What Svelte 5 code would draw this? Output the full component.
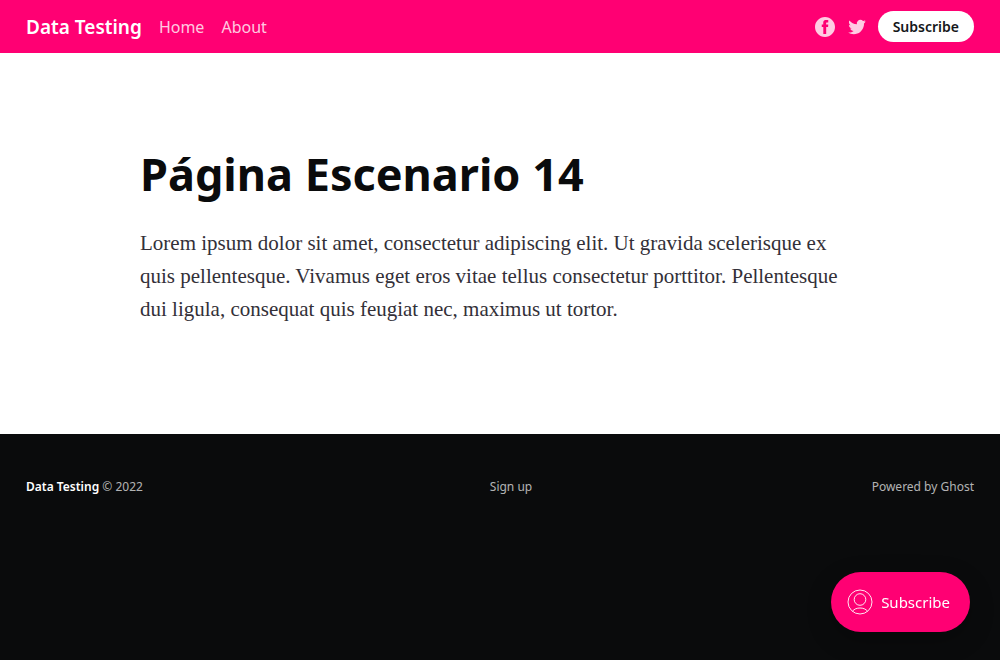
<script>
  const title = 'Data Testing';
</script>

<div class="page">
  <header class="bar">
    <nav class="links">
      <a class="brand" href="#home">{title}</a>
      <a href="#home">Home</a>
      <a href="#about">About</a>
    </nav>
    <div class="actions">
      <div class="socials">
        <a href="#facebook" aria-label="Facebook">
          <svg width="20" height="20" viewBox="0 0 32 32" fill="currentColor"><path d="M16 0c8.837 0 16 7.163 16 16s-7.163 16-16 16S0 24.837 0 16 7.163 0 16 0zm5.204 4.911h-3.546c-2.103 0-4.443.885-4.443 3.934.01 1.062 0 2.08 0 3.225h-2.433v3.872h2.509v11.147h4.61v-11.22h3.042l.275-3.81h-3.397s.007-1.695 0-2.187c0-1.205 1.253-1.136 1.329-1.136.596 0 1.756.002 2.054 0V4.911z" /></svg>
        </a>
        <a href="#twitter" aria-label="Twitter">
          <svg width="20" height="20" viewBox="0 0 32 32" fill="currentColor"><path d="M30.063 7.313c-.813 1.125-1.75 2.125-2.875 2.938v.75c0 1.563-.188 3.125-.688 4.625a15.088 15.088 0 0 1-2.063 4.438c-.875 1.438-2 2.688-3.25 3.813a15.015 15.015 0 0 1-4.625 2.563c-1.813.688-3.75 1-5.75 1-3.25 0-6.188-.875-8.875-2.625.438.063.875.125 1.375.125 2.688 0 5.063-.875 7.188-2.5-1.25 0-2.375-.375-3.375-1.125s-1.688-1.688-2.063-2.875c.438.063.813.125 1.125.125.5 0 1-.063 1.5-.25-1.313-.25-2.438-.938-3.313-1.938a5.673 5.673 0 0 1-1.313-3.688v-.063c.813.438 1.688.688 2.625.688a5.228 5.228 0 0 1-1.875-2c-.5-.875-.688-1.813-.688-2.75 0-1.063.25-2.063.75-2.938 1.438 1.75 3.188 3.188 5.25 4.25s4.313 1.688 6.688 1.813a5.579 5.579 0 0 1 1.5-5.438c1.125-1.125 2.5-1.688 4.125-1.688s3.063.625 4.188 1.813a11.48 11.48 0 0 0 3.688-1.375c-.438 1.375-1.313 2.438-2.563 3.188 1.125-.125 2.188-.438 3.313-.875z" /></svg>
        </a>
      </div>
      <button class="subscribe">Subscribe</button>
    </div>
  </header>

  <main>
    <article>
      <h1>Página Escenario 14</h1>
      <p>
        Lorem ipsum dolor sit amet, consectetur adipiscing elit. Ut gravida scelerisque ex quis
        pellentesque. Vivamus eget eros vitae tellus consectetur porttitor. Pellentesque dui ligula,
        consequat quis feugiat nec, maximus ut tortor.
      </p>
    </article>
  </main>

  <footer>
    <section><a class="name" href="#home">{title}</a> © 2022</section>
    <nav class="signup"><a href="#signup">Sign up</a></nav>
    <div class="powered"><a href="#ghost">Powered by Ghost</a></div>
  </footer>

  <button class="portal">
    <svg width="26" height="26" viewBox="0 0 26 26" fill="none" stroke="currentColor" stroke-width="0.9" aria-hidden="true">
      <circle cx="13" cy="13" r="12" />
      <circle cx="13" cy="10.5" r="5.8" />
      <path d="M5.500 22.200C7.200 20 9.900 19 13 19s5.800 1 7.500 3.200" />
    </svg>
    <span>Subscribe</span>
  </button>
</div>

<style>
  :global(body) {
    margin: 0;
    background: #0a0b0c;
  }
  .page {
    min-height: 100vh;
    display: flex;
    flex-direction: column;
    font-family: 'Noto Sans', sans-serif;
    background: #fff;
  }
  a {
    color: inherit;
    text-decoration: none;
  }
  button {
    border: 0;
    font-family: inherit;
    cursor: pointer;
  }
  .bar {
    display: flex;
    align-items: center;
    justify-content: space-between;
    height: 53px;
    padding: 0 26px;
    background: #ff0073;
    color: rgba(255, 255, 255, 0.8);
    font-size: 16px;
  }
  .links {
    display: flex;
    align-items: center;
    gap: 17px;
  }
  .brand {
    color: #fff;
    font-size: 19px;
    font-weight: 600;
  }
  .actions {
    display: flex;
    align-items: center;
    gap: 11px;
  }
  .socials {
    display: flex;
    gap: 12px;
  }
  .socials a {
    display: flex;
  }
  .subscribe {
    height: 31px;
    padding: 0 15px;
    border-radius: 16px;
    background: #fff;
    color: #15171a;
    font-size: 14px;
    font-weight: 600;
  }
  main {
    padding: 88px 26px 108px;
  }
  article {
    max-width: 720px;
    margin: 0 auto;
  }
  h1 {
    margin: 0 0 20px;
    color: #0a0b0c;
    font-size: 45px;
    font-weight: 700;
    line-height: 66px;
  }
  p {
    margin: 0;
    color: #333038;
    font-family: 'Liberation Serif', serif;
    font-size: 21px;
    line-height: 33px;
  }
  footer {
    flex: 1;
    display: grid;
    grid-template-columns: 1fr auto 1fr;
    align-items: start;
    padding: 42px 26px 60px;
    background: #0a0b0c;
    color: rgba(255, 255, 255, 0.7);
    font-size: 12px;
    line-height: 21px;
  }
  .name {
    color: #fff;
    font-weight: 600;
  }
  .signup {
    padding-left: 22px;
  }
  .powered {
    text-align: right;
  }
  .portal {
    position: fixed;
    right: 30px;
    bottom: 28px;
    display: flex;
    align-items: center;
    gap: 8px;
    height: 60px;
    padding: 0 20px 0 16px;
    border-radius: 30px;
    background: #ff0073;
    color: #fff;
    font-size: 15px;
    box-shadow: 0 8px 24px rgba(0, 0, 0, 0.25);
  }
</style>
